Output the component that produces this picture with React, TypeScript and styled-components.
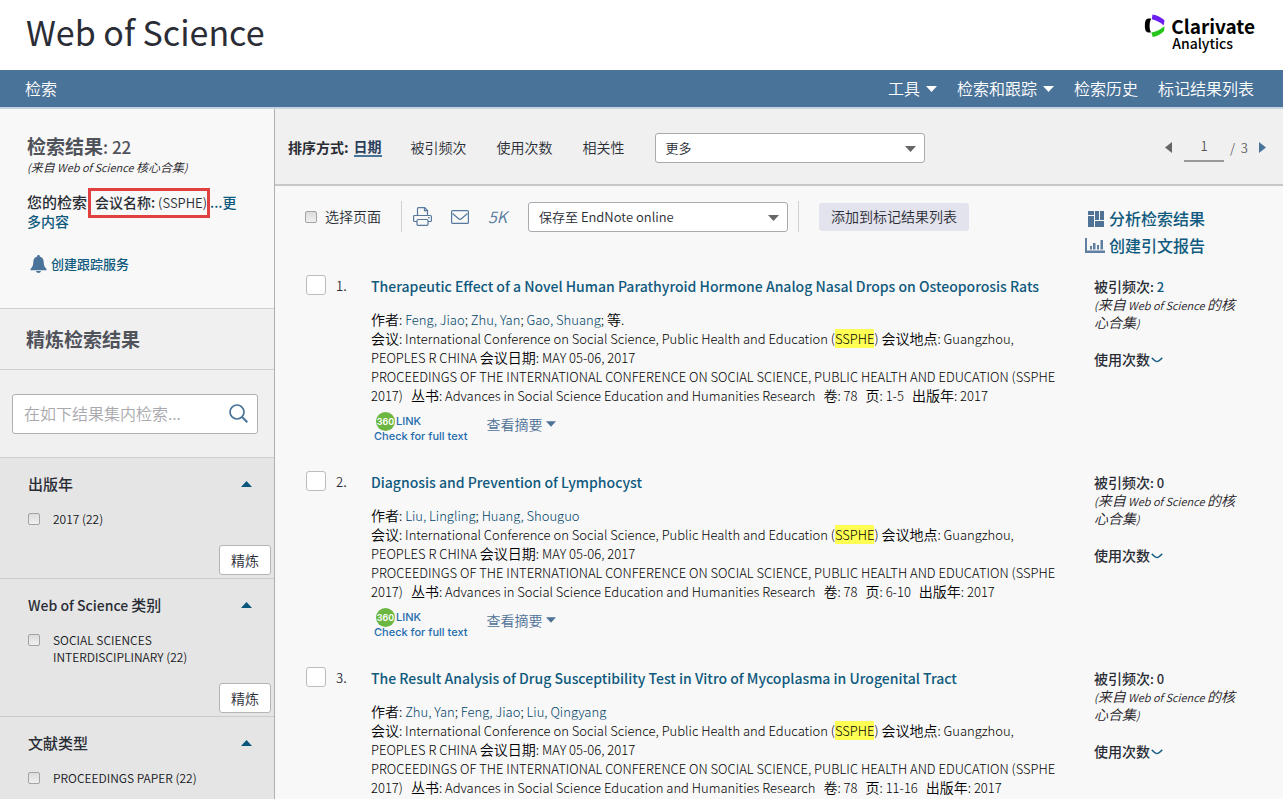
import React from 'react';
import styled, { createGlobalStyle } from 'styled-components';

const GlobalStyle = createGlobalStyle`
  *, *::before, *::after { box-sizing: border-box; }
  html { scrollbar-width: none; }
  body {
    margin: 0;
    background: #f8f8f8;
    color: #2a2d35;
    font-family: "Noto Sans CJK SC", "Open Sans", sans-serif;
    font-size: 14px;
    font-weight: 350;
    line-height: 19px;
  }
  button, input, select { font: inherit; color: inherit; }
  h1, h2, h3, p { margin: 0; font: inherit; }
  a { color: #0f5a7e; text-decoration: none; }
`;

/* ---------- shared ---------- */

const Page = styled.div`
  display: flex;
  flex-direction: column;
  min-height: 100vh;
`;

const Han = styled.span`
  font-size: 14px;
  font-weight: 350;
  line-height: 1;
`;

type Direction = 'up' | 'down' | 'left' | 'right';

const caretShapes: Record<Direction, { w: number; h: number; points: string }> = {
  down: { w: 11, h: 6, points: '0,0 11,0 5.5,6' },
  up: { w: 11, h: 6, points: '0,6 11,6 5.5,0' },
  left: { w: 7, h: 11, points: '7,0 7,11 0,5.5' },
  right: { w: 7, h: 11, points: '0,0 0,11 7,5.5' },
};

const Caret = ({ direction, className }: { direction: Direction; className?: string }) => {
  const { w, h, points } = caretShapes[direction];
  return (
    <svg className={className} width={w} height={h} viewBox={`0 0 ${w} ${h}`} aria-hidden="true">
      <polygon points={points} fill="currentColor" />
    </svg>
  );
};

const PlainButton = styled.button`
  display: inline-flex;
  align-items: center;
  padding: 0;
  border: 0;
  background: none;
  cursor: pointer;
`;

const SmallCheckbox = styled.input.attrs({ type: 'checkbox' })`
  appearance: none;
  flex: none;
  width: 12px;
  height: 12px;
  margin: 0;
  border: 1px solid #a3a3a3;
  border-radius: 2px;
  background: linear-gradient(#dcdcdc, #f0f0f0);
`;

const SelectFrame = styled.div<{ $width: number }>`
  position: relative;
  flex: 0 1 ${({ $width }) => $width}px;
`;

const SelectBox = styled.select`
  appearance: none;
  display: block;
  width: 100%;
  height: 30px;
  padding: 0 30px 0 10px;
  border: 1px solid #a9a9b0;
  border-radius: 3px;
  background: #fff;
  font-size: 13px;
`;

const SelectCaret = styled(Caret)`
  position: absolute;
  top: 13px;
  right: 9px;
  color: #666;
  pointer-events: none;
`;

const Dropdown = ({ label, width }: { label: string; width: number }) => (
  <SelectFrame $width={width}>
    <SelectBox aria-label={label}>
      <option>{label}</option>
    </SelectBox>
    <SelectCaret direction="down" />
  </SelectFrame>
);

/* ---------- header ---------- */

const Header = styled.header`
  display: flex;
  align-items: flex-start;
  justify-content: space-between;
  height: 70px;
  padding: 0 28px 0 26px;
  background: #fff;
`;

const Brand = styled.h1`
  font-size: 34px;
  font-weight: 400;
  line-height: 64px;
  color: #2a2d35;
`;

const Company = styled.a`
  display: flex;
  gap: 6px;
  padding-top: 14px;
  color: #000;
`;

const CompanyName = styled.span`
  display: flex;
  flex-direction: column;
  padding-top: 3px;
  font-size: 19px;
  font-weight: 700;
  line-height: 18px;
`;

const CompanyUnit = styled.span`
  padding-left: 1px;
  font-size: 14px;
  font-weight: 500;
  line-height: 16px;
`;

const Nav = styled.nav`
  display: flex;
  align-items: center;
  gap: 20px;
  height: 39px;
  padding: 0 29px 0 25px;
  border-bottom: 2px solid #c5d3e0;
  background: #4a7399;
  color: #fff;
  font-size: 16px;
`;

const NavLink = styled.a`
  color: #fff;
`;

const NavButton = styled(PlainButton)`
  gap: 6px;
`;

const Spacer = styled.div`
  flex: 1;
`;

/* ---------- sidebar ---------- */

const Body = styled.div`
  display: flex;
  flex: 1;
`;

const Sidebar = styled.aside`
  flex: 0 0 275px;
  border-right: 1px solid #b0b0b4;
  background: #e5e5e5;
`;

const Summary = styled.section`
  height: 200px;
  padding: 27px 27px 0;
  border-bottom: 1px solid #d0d0d0;
  background: #f8f8f8;
`;

const ResultCount = styled.h2`
  font-size: 17px;
  font-weight: 500;
  line-height: 22px;
  color: #50535a;
`;

const CountLabel = styled.span`
  font-size: 19px;
  font-weight: 700;
  line-height: 1;
`;

const Origin = styled.p`
  font-size: 11px;
  font-style: italic;
  line-height: 18px;
  color: #1d2026;
`;

const OriginHan = styled(Han)`
  font-size: 12px;
`;

const Query = styled.p`
  margin-top: 17px;
  font-weight: 500;
`;

const QueryLabel = styled.span`
  font-size: 15px;
  line-height: 1;
`;

const QueryTerm = styled.span`
  position: relative;
  margin: 0 3px 0 8px;
  font-size: 13px;
  font-weight: 350;

  &::after {
    content: '';
    position: absolute;
    inset: -5px -3px -6px -7px;
    border: 3px solid #e0403f;
  }
`;

const TermField = styled.b`
  font-size: 14px;
  font-weight: 500;
  line-height: 1;
`;

const AlertLink = styled.a`
  display: flex;
  align-items: center;
  gap: 4px;
  margin-top: 23px;
  padding-left: 3px;
  font-size: 13px;
  font-weight: 500;
`;

const RefineHeading = styled.h2`
  padding: 0 26px;
  border-bottom: 1px solid #d0d0d0;
  background: #f0f0f0;
  color: #50535a;
  font-size: 19px;
  font-weight: 700;
  line-height: 60px;
`;

const SearchArea = styled.form`
  padding: 24px 16px 23px 12px;
  border-bottom: 1px solid #d0d0d0;
  background: #f0f0f0;
`;

const SearchBox = styled.div`
  display: flex;
  align-items: center;
  height: 40px;
  padding: 0 9px 2px 11px;
  border: 1px solid #b0b0b4;
  border-radius: 3px;
  background: #fff;
`;

const SearchInput = styled.input`
  flex: 1;
  min-width: 0;
  padding: 0;
  border: 0;
  outline: 0;
  background: none;
  font-size: 16px;

  &::placeholder { color: #a9a9ad; }
`;

const Facet = styled.section`
  padding: 16px 3px 3px 28px;

  & + & { border-top: 1px solid #cbcbcb; }
`;

const FacetHeader = styled.div`
  display: flex;
  align-items: center;
  justify-content: space-between;
  height: 20px;
  padding-right: 19px;
  color: #0b567c;
`;

const FacetTitle = styled.h3`
  color: #2a2d35;
  font-size: 14px;
  font-weight: 500;
`;

const FacetHan = styled.span`
  font-size: 15px;
  font-weight: 500;
  line-height: 1;
`;

const FacetOption = styled.label`
  display: flex;
  align-items: flex-start;
  gap: 13px;
  margin: 16px 70px 18px 0;
  font-size: 12px;
  line-height: 17px;
  color: #15171c;

  input { margin-top: 3px; }
`;

const RefineButton = styled.button`
  display: block;
  width: 52px;
  height: 30px;
  margin-left: auto;
  padding: 0;
  border: 1px solid #b5b5b9;
  border-radius: 3px;
  background: #fff;
  font-size: 14px;
`;

/* ---------- results ---------- */

const Main = styled.main`
  flex: 1;
  min-width: 0;
`;

const SortBar = styled.div`
  display: flex;
  align-items: center;
  height: 77px;
  padding: 2px 17px 0 13px;
  border-bottom: 2px solid #c8c8c8;
  background: #f0f0f0;
`;

const SortLabel = styled.span`
  margin-right: 5px;
  font-weight: 700;
`;

const SortLink = styled.a<{ $active?: boolean }>`
  margin-right: ${({ $active }) => ($active ? 29 : 30)}px;
  color: ${({ $active }) => ($active ? '#2b3f5c' : '#2a2d35')};
  font-weight: ${({ $active }) => ($active ? 700 : 350)};
  line-height: 17px;
  border-bottom: ${({ $active }) => ($active ? '2px solid #4a7399' : '0')};
`;

const Pager = styled.div`
  display: flex;
  align-items: center;
  color: #666;
  font-size: 13px;
`;

const PageInput = styled.input`
  width: 40px;
  height: 28px;
  margin: 0 6px 0 12px;
  padding: 0 0 2px;
  border: 0;
  border-bottom: 2px solid #999;
  background: none;
  color: #555;
  text-align: center;
`;

const NextButton = styled(PlainButton)`
  margin-left: 11px;
  color: #4a7399;
`;

const Tools = styled.div`
  display: flex;
  align-items: flex-start;
  justify-content: space-between;
  height: 89px;
  padding-left: 30px;
`;

const ToolRow = styled.div`
  display: flex;
  flex: 1;
  align-items: center;
  padding-top: 15px;
`;

const SelectPage = styled.label`
  display: flex;
  align-items: center;
  gap: 8px;
  padding-right: 20px;
`;

const IconGroup = styled.div`
  display: flex;
  align-items: center;
  gap: 19px;
  height: 31px;
  padding: 0 21px 0 11px;
  border-left: 1px solid #cfcfcf;
  color: #56799d;
`;

const FiveK = styled(PlainButton)`
  font-size: 16px;
  font-style: italic;
`;

const MarkGroup = styled.div`
  display: flex;
  align-items: center;
  height: 31px;
  margin-left: 10px;
  padding-left: 20px;
  border-left: 1px solid #cfcfcf;
`;

const MarkButton = styled.button`
  height: 28px;
  padding: 0 12px;
  border: 0;
  border-radius: 3px;
  background: #e3e3ed;
`;

const ReportLinks = styled.div`
  display: flex;
  flex: 0 0 198px;
  flex-direction: column;
  padding-top: 19px;
`;

const ReportLink = styled.a`
  display: flex;
  align-items: center;
  gap: 4px;
  font-size: 16px;
  font-weight: 500;
  line-height: 27px;

  svg { flex: none; width: 20px; }
`;

const Records = styled.ol`
  margin: 0;
  padding: 0;
  list-style: none;
`;

const RecordItem = styled.li`
  display: flex;
  align-items: flex-start;
  padding: 0 45px 30px 31px;

  &:last-child { padding-bottom: 0; }
`;

const RecordCheck = styled.input.attrs({ type: 'checkbox' })`
  appearance: none;
  flex: none;
  width: 20px;
  height: 20px;
  margin: 0 10px 0 0;
  border: 1px solid #bcbcc0;
  border-radius: 3px;
  background: #fff;
`;

const RecordNumber = styled.span`
  flex: 0 0 35px;
  font-size: 13px;
  line-height: 21px;
`;

const RecordMain = styled.div`
  flex: 1;
  min-width: 0;
  padding-right: 27px;
`;

const RecordTitle = styled.h3`
  margin-bottom: 13px;
  font-size: 14px;
  font-weight: 500;
  line-height: 22px;
`;

const Line = styled.p`
  color: #000;
  font-size: 13px;
  font-weight: 300;

  a { color: #004468; }
`;

const Field = styled.span`
  margin-right: 8px;
`;

const Hit = styled.mark`
  background: #ffff54;
  color: inherit;
`;

const RecordLinks = styled.div`
  display: flex;
  gap: 19px;
  height: 36px;
  padding: 5px 0 0 3px;
`;

const FullTextLink = styled.a`
  display: flex;
  flex-direction: column;
  padding-top: 3px;
  color: #1f6cae;
  font-family: Inter, sans-serif;
  font-size: 11px;
  font-weight: 500;
  line-height: 14px;
`;

const FullTextTop = styled.span`
  display: flex;
  align-items: center;
  gap: 1px;
  height: 16px;
  padding-left: 2px;
`;

const Badge = styled.span`
  width: 19px;
  height: 19px;
  border-radius: 50%;
  background: #6cb741;
  color: #fff;
  font-size: 9px;
  font-weight: 600;
  line-height: 19px;
  text-align: center;
`;

const AbstractButton = styled(PlainButton)`
  gap: 4px;
  height: 28px;
  color: #4f7297;

  svg { width: 10px; }
`;

const Stats = styled.div`
  flex: 0 0 144px;
`;

const Cited = styled.p`
  padding-top: 1px;
  font-size: 13px;
  font-weight: 500;
  line-height: 21px;
`;

const StatHan = styled(Han)`
  font-weight: 500;
`;

const StatOrigin = styled(Origin)`
  margin: -1px 0 18px;
`;

const UsageButton = styled(PlainButton)`
  gap: 1px;
  font-weight: 500;
`;

/* ---------- drawings ---------- */

const LogoMark = () => (
  <svg width="21" height="24" viewBox="0 0 21 24" aria-hidden="true">
    <path d="M7.200 4.700C5.800 4.300 3.200 4.200 2 5.700.5 8 .5 15 2 17.300c1.200 1.500 3.600 1.500 5 .9C5.200 15.800 5 8 7.200 4.700z" fill="#000" />
    <path d="M8.500.5c4.700.8 8.500 2.700 12 5.700l-.8 5.300C16.500 8.500 12.500 6.400 7.800 5.300z" fill="#6a1ff0" />
    <path d="M20.500 12.300l-.4 4.700c-3.300 3.200-7 5.200-11.300 6L7.300 18.500c4.500-.7 9-2.700 13.200-6.200z" fill="#25c51a" />
  </svg>
);

const Bell = () => (
  <svg width="17" height="18" viewBox="0 0 17 18" aria-hidden="true">
    <path
      d="M8.500 0c.8 0 1.300.5 1.300 1.400 2.500.6 3.900 2.700 3.900 5.600 0 3.400.9 5.200 2.800 7v1.200H.5V14c1.900-1.800 2.800-3.600 2.800-7 0-2.900 1.400-5 3.900-5.600C7.200.5 7.700 0 8.500 0zM6 16h5c-.3 1.200-1.200 1.900-2.500 1.900S6.300 17.200 6 16z"
      fill="#4a7399"
    />
  </svg>
);

const Magnifier = () => (
  <svg width="19" height="19" viewBox="0 0 19 19" fill="none" stroke="#4a7399" strokeWidth="1.700" aria-hidden="true">
    <circle cx="8" cy="8" r="7" />
    <path d="M13 13l5.300 5.300" strokeWidth="2" />
  </svg>
);

const Printer = () => (
  <svg width="19" height="19" viewBox="0 0 19 19" fill="none" stroke="currentColor" strokeWidth="1.200" aria-hidden="true">
    <path d="M4.500 8.500V1.500a.9.900 0 0 1 .9-.9h6.300l2.800 2.800v5.100" />
    <path d="M11.500.8v2.800h2.800" />
    <path d="M4 14.500H1.600a1 1 0 0 1-1-1v-4a1 1 0 0 1 1-1h15.800a1 1 0 0 1 1 1v4a1 1 0 0 1-1 1H15" />
    <rect x="4" y="12.500" width="11" height="5.800" rx="1" />
    <path d="M15 10.600h1.600" />
  </svg>
);

const Envelope = () => (
  <svg width="18" height="14" viewBox="0 0 18 14" fill="none" stroke="currentColor" strokeWidth="1.200" aria-hidden="true">
    <rect x=".6" y=".6" width="16.800" height="12.800" rx="1" />
    <path d="M1.500 3.500L7.600 8.700a2.200 2.200 0 0 0 2.800 0L16.500 3.500" />
  </svg>
);

const Treemap = () => (
  <svg width="20" height="16" viewBox="0 0 20 16" fill="#4f7297" aria-hidden="true">
    <path d="M3 0h6v4H3zM3 5h6v11H3zM10 0h4v9h-4zM15 0h4v9h-4zM10 10h9v6h-9z" />
  </svg>
);

const BarReport = () => (
  <svg width="20" height="15" viewBox="0 0 20 15" fill="#5f7fa3" aria-hidden="true">
    <path d="M0 0h2v12.500h18V15H0zM5 8h2v3.500H5zM8 5h2.500v6.500H8zM12 7h2v4.500h-2zM15.500 2H18v9.500h-2.500z" />
  </svg>
);

const Chevron = () => (
  <svg width="12" height="6" viewBox="0 0 12 6" fill="none" stroke="#0f5a7e" strokeWidth="1.500" aria-hidden="true">
    <path d="M.8.900C3 3 4.500 4.600 6 4.600S9 3 11.200.9" />
  </svg>
);

/* ---------- data ---------- */

const facets = [
  { latin: '', han: '出版年', option: '2017 (22)', refine: true },
  { latin: 'Web of Science ', han: '类别', option: 'SOCIAL SCIENCES INTERDISCIPLINARY (22)', refine: true },
  { latin: '', han: '文献类型', option: 'PROCEEDINGS PAPER (22)', refine: false },
];

const records = [
  {
    title: 'Therapeutic Effect of a Novel Human Parathyroid Hormone Analog Nasal Drops on Osteoporosis Rats',
    authors: ['Feng, Jiao', 'Zhu, Yan', 'Gao, Shuang'],
    more: true,
    pages: '1-5',
    cited: 2,
    links: true,
  },
  {
    title: 'Diagnosis and Prevention of Lymphocyst',
    authors: ['Liu, Lingling', 'Huang, Shouguo'],
    more: false,
    pages: '6-10',
    cited: 0,
    links: true,
  },
  {
    title: 'The Result Analysis of Drug Susceptibility Test in Vitro of Mycoplasma in Urogenital Tract',
    authors: ['Zhu, Yan', 'Feng, Jiao', 'Liu, Qingyang'],
    more: false,
    pages: '11-16',
    cited: 0,
    links: false,
  },
];

type RecordData = (typeof records)[number];

const Record = ({ record, index }: { record: RecordData; index: number }) => (
  <RecordItem>
    <RecordCheck aria-label={record.title} />
    <RecordNumber>{index}.</RecordNumber>
    <RecordMain>
      <RecordTitle><a href="#record">{record.title}</a></RecordTitle>
      <Line>
        <Han>作者</Han>:{' '}
        {record.authors.map((author, i) => (
          <React.Fragment key={author}>
            {i > 0 && '; '}
            <a href="#author">{author}</a>
          </React.Fragment>
        ))}
        {record.more && <>; <Han>等</Han>.</>}
      </Line>
      <Line>
        <Han>会议</Han>: International Conference on Social Science, Public Health and Education (<Hit>SSPHE</Hit>){' '}
        <Han>会议地点</Han>: Guangzhou, PEOPLES R CHINA <Han>会议日期</Han>: MAY 05-06, 2017
      </Line>
      <Line>
        <Field>PROCEEDINGS OF THE INTERNATIONAL CONFERENCE ON SOCIAL SCIENCE, PUBLIC HEALTH AND EDUCATION (SSPHE 2017)</Field>
        <Field><Han>丛书</Han>: Advances in Social Science Education and Humanities Research</Field>
        <Field><Han>卷</Han>: 78</Field>
        <Field><Han>页</Han>: {record.pages}</Field>
        <Han>出版年</Han>: 2017
      </Line>
      {record.links && (
        <RecordLinks>
          <FullTextLink href="#fulltext">
            <FullTextTop><Badge>360</Badge>LINK</FullTextTop>
            Check for full text
          </FullTextLink>
          <AbstractButton>查看摘要 <Caret direction="down" /></AbstractButton>
        </RecordLinks>
      )}
    </RecordMain>
    <Stats>
      <Cited>
        <StatHan>被引频次</StatHan>: {record.cited > 0 ? <a href="#cited">{record.cited}</a> : record.cited}
      </Cited>
      <StatOrigin>(<Han>来自</Han> Web of Science <Han>的核心合集</Han>)</StatOrigin>
      <UsageButton>使用次数<Chevron /></UsageButton>
    </Stats>
  </RecordItem>
);

export default function App() {
  return (
    <Page>
      <GlobalStyle />
      <Header>
        <Brand>Web of Science</Brand>
        <Company href="#company">
          <LogoMark />
          <CompanyName>
            Clarivate
            <CompanyUnit>Analytics</CompanyUnit>
          </CompanyName>
        </Company>
      </Header>
      <Nav>
        <NavLink href="#search">检索</NavLink>
        <Spacer />
        <NavButton>工具 <Caret direction="down" /></NavButton>
        <NavButton>检索和跟踪 <Caret direction="down" /></NavButton>
        <NavLink href="#history">检索历史</NavLink>
        <NavLink href="#marked">标记结果列表</NavLink>
      </Nav>
      <Body>
        <Sidebar>
          <Summary>
            <ResultCount><CountLabel>检索结果</CountLabel>: 22</ResultCount>
            <Origin>(<OriginHan>来自</OriginHan> Web of Science <OriginHan>核心合集</OriginHan>)</Origin>
            <Query>
              <QueryLabel>您的检索</QueryLabel>
              <QueryTerm><TermField>会议名称:</TermField> (SSPHE)</QueryTerm>
              <a href="#more">...更多内容</a>
            </Query>
            <AlertLink href="#alert"><Bell />创建跟踪服务</AlertLink>
          </Summary>
          <RefineHeading>精炼检索结果</RefineHeading>
          <SearchArea>
            <SearchBox>
              <SearchInput placeholder="在如下结果集内检索..." aria-label="在如下结果集内检索" />
              <PlainButton type="button" aria-label="检索"><Magnifier /></PlainButton>
            </SearchBox>
          </SearchArea>
          {facets.map((facet) => (
            <Facet key={facet.han}>
              <FacetHeader>
                <FacetTitle>{facet.latin}<FacetHan>{facet.han}</FacetHan></FacetTitle>
                <Caret direction="up" />
              </FacetHeader>
              <FacetOption>
                <SmallCheckbox />
                {facet.option}
              </FacetOption>
              {facet.refine && <RefineButton>精炼</RefineButton>}
            </Facet>
          ))}
        </Sidebar>
        <Main>
          <SortBar>
            <SortLabel>排序方式:</SortLabel>
            <SortLink href="#date" $active>日期</SortLink>
            <SortLink href="#cited">被引频次</SortLink>
            <SortLink href="#usage">使用次数</SortLink>
            <SortLink href="#relevance">相关性</SortLink>
            <Dropdown label="更多" width={270} />
            <Spacer />
            <Pager>
              <PlainButton aria-label="上一页"><Caret direction="left" /></PlainButton>
              <PageInput defaultValue="1" aria-label="页" />
              / &nbsp;3
              <NextButton aria-label="下一页"><Caret direction="right" /></NextButton>
            </Pager>
          </SortBar>
          <Tools>
            <ToolRow>
              <SelectPage><SmallCheckbox />选择页面</SelectPage>
              <IconGroup>
                <PlainButton aria-label="打印"><Printer /></PlainButton>
                <PlainButton aria-label="电子邮件"><Envelope /></PlainButton>
                <FiveK>5K</FiveK>
              </IconGroup>
              <Dropdown label="保存至 EndNote online" width={260} />
              <MarkGroup><MarkButton>添加到标记结果列表</MarkButton></MarkGroup>
            </ToolRow>
            <ReportLinks>
              <ReportLink href="#analyze"><Treemap />分析检索结果</ReportLink>
              <ReportLink href="#report"><BarReport />创建引文报告</ReportLink>
            </ReportLinks>
          </Tools>
          <Records>
            {records.map((record, i) => (
              <Record key={record.title} record={record} index={i + 1} />
            ))}
          </Records>
        </Main>
      </Body>
    </Page>
  );
}
